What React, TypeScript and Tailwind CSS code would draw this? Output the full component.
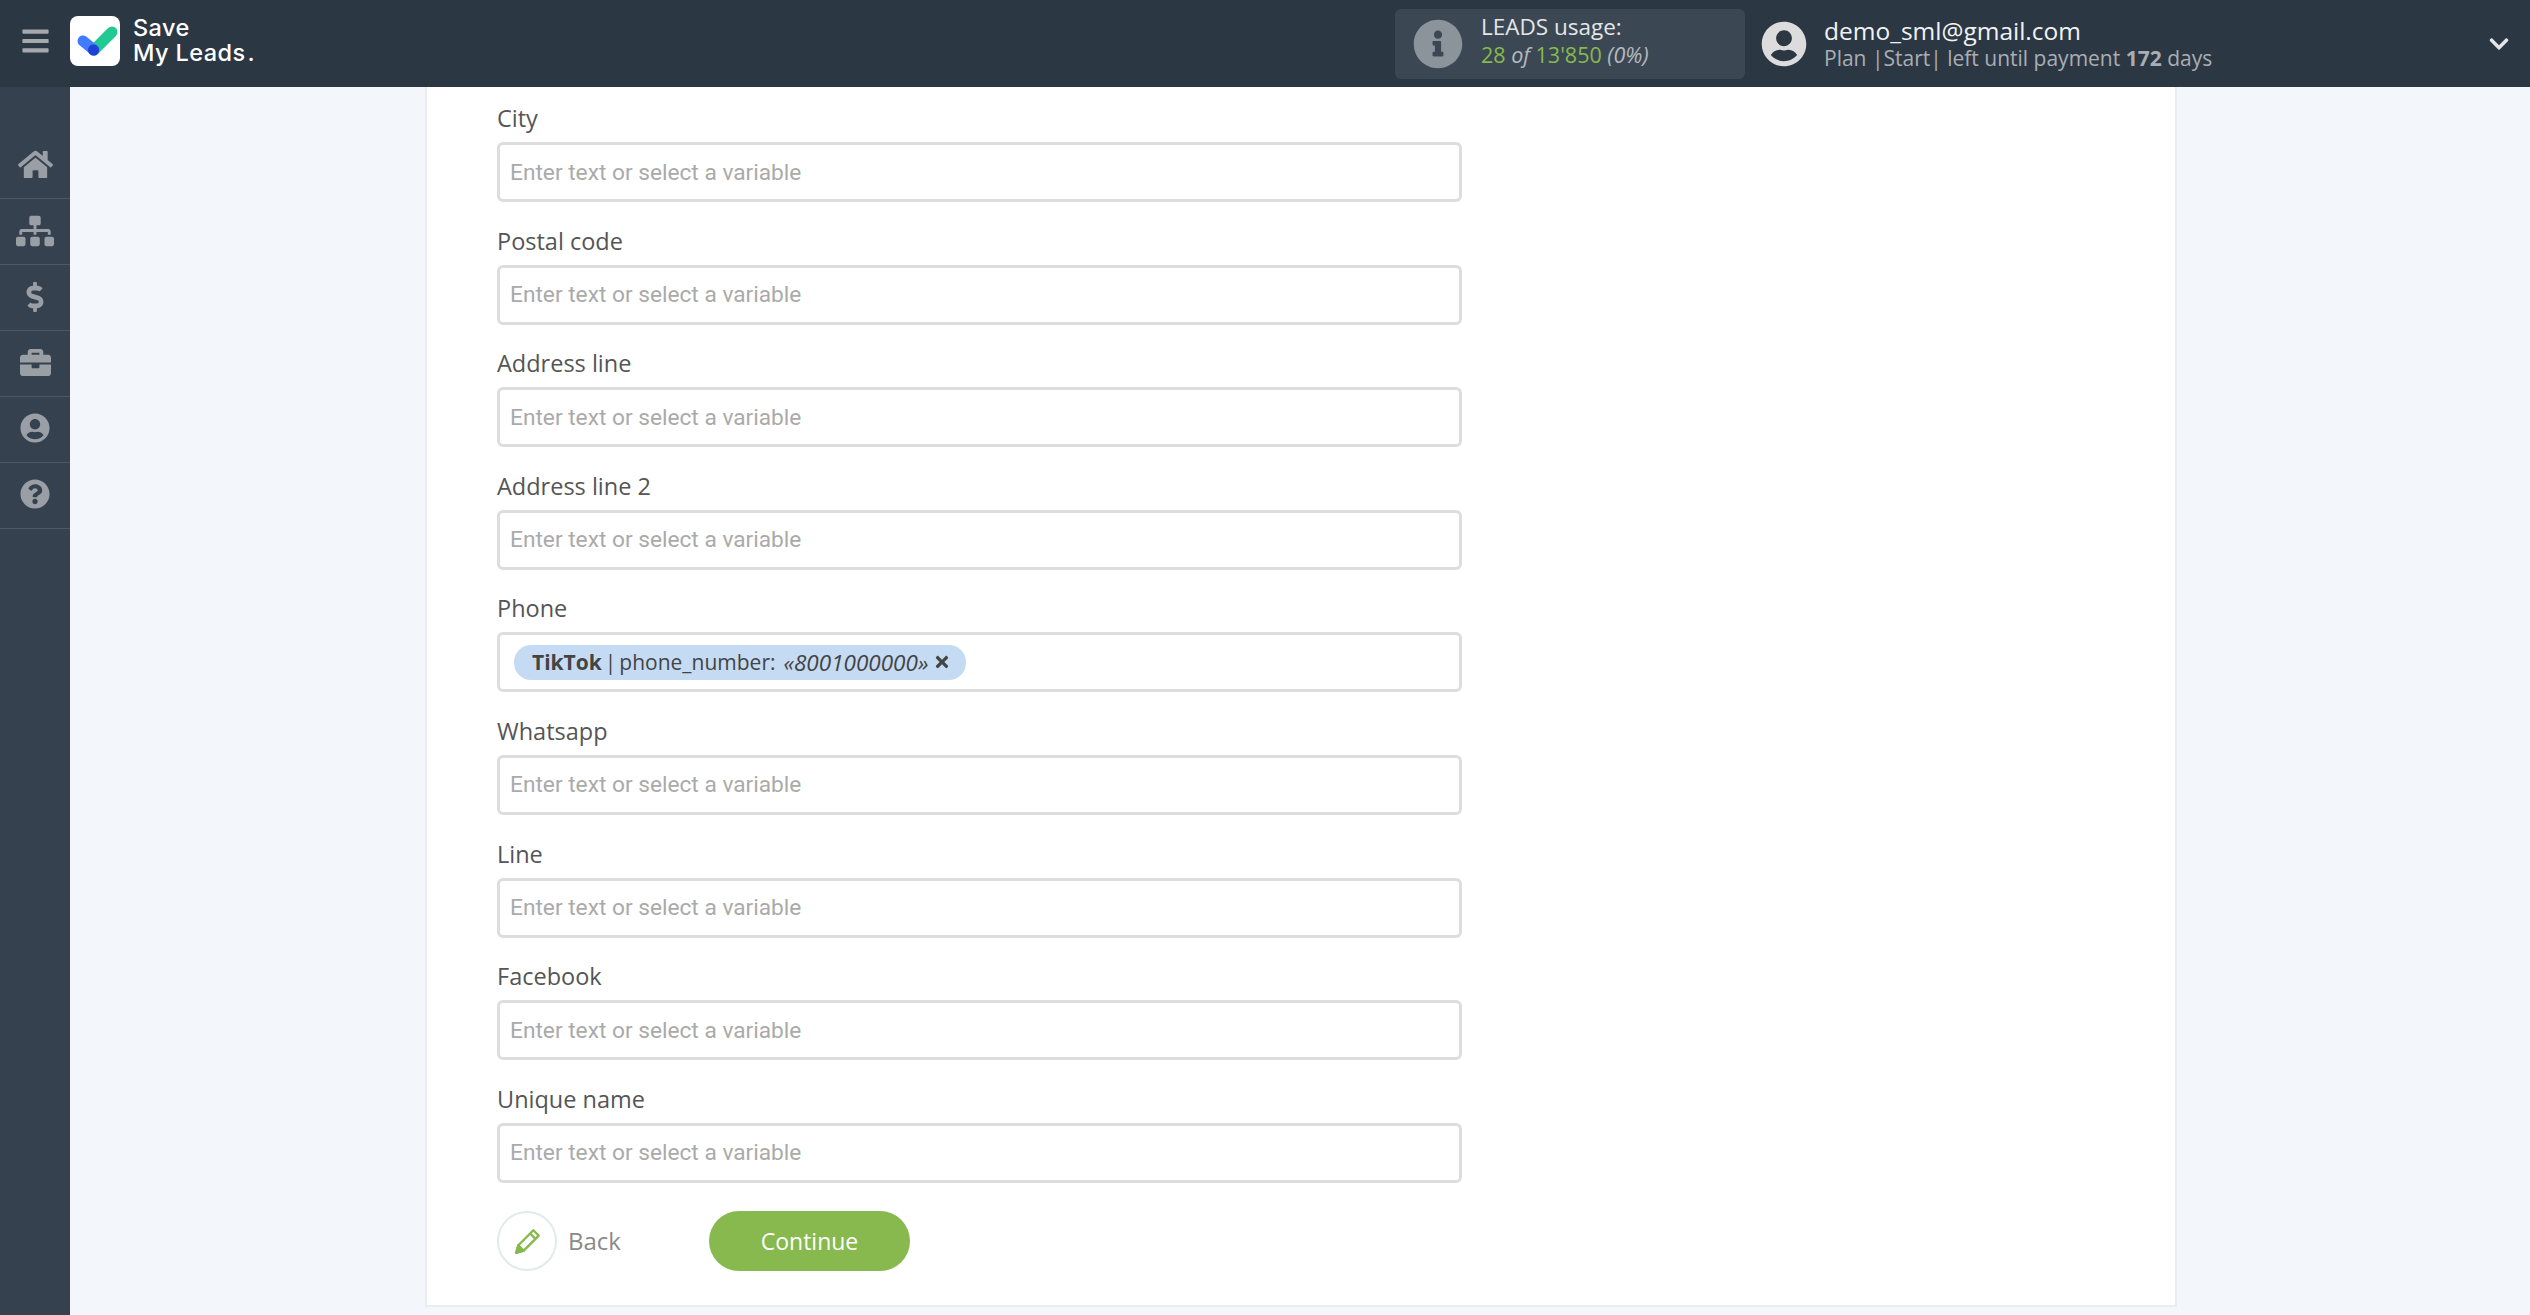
import { FaBars, FaBriefcase, FaChevronDown, FaDollarSign, FaHome, FaInfoCircle, FaQuestionCircle, FaSitemap, FaTimes, FaUserCircle } from "react-icons/fa";

const navItems = [
  { name: "home", icon: <FaHome className="w-[35px] h-[35px]" /> },
  { name: "structure", icon: <FaSitemap className="mt-[2px] w-[38px] h-[38px]" /> },
  { name: "billing", icon: <FaDollarSign className="mt-[2px] w-[30px] h-[30px]" /> },
  { name: "cases", icon: <FaBriefcase className="w-[31px] h-[31px]" /> },
  { name: "profile", icon: <FaUserCircle className="w-[30px] h-[30px]" /> },
  { name: "help", icon: <FaQuestionCircle className="w-[30px] h-[30px]" /> },
];

const fields = ["City", "Postal code", "Address line", "Address line 2", "Phone", "Whatsapp", "Line", "Facebook", "Unique name"];

function Logo() {
  return (
    <svg width="50" height="50" viewBox="0 0 50 50" className="shrink-0">
      <rect width="50" height="50" rx="8" fill="#fff" />
      <path d="M24 34 L42 16" stroke="#22c993" strokeWidth="11" strokeLinecap="round" fill="none" />
      <path d="M13 25 L24 34" stroke="#3f7cff" strokeWidth="11" strokeLinecap="round" fill="none" />
      <circle cx="23.5" cy="34" r="5.5" fill="#1f3fd6" />
    </svg>
  );
}

function Field({ label }: { label: string }) {
  return (
    <div className="h-[122.6px]">
      <div className="h-[38px] pt-[1px] text-[23.5px] leading-[26px] text-[#555] font-['Open_Sans',sans-serif]">{label}</div>
      {label === "Phone" ? (
        <div className="flex items-center w-[965px] h-[60px] border-[3px] border-[#ddd] rounded-[6px] pl-[14px] bg-white">
          <div className="flex items-center h-[35px] pl-[18px] pr-[15px] rounded-[17px] bg-[#c5dbf3] text-[#444] text-[21px] font-['Open_Sans',sans-serif] whitespace-nowrap">
            <b>TikTok</b>
            <span className="ml-[3px]">|</span>
            <span className="ml-[3px]">phone_number:</span>
            <i className="ml-[8px] text-[22.5px]">«8001000000»</i>
            <FaTimes className="ml-[5px] w-[18px] h-[18px]" />
          </div>
        </div>
      ) : (
        <input
          placeholder="Enter text or select a variable"
          className="block w-[965px] h-[60px] border-[3px] border-[#ddd] rounded-[6px] px-[10px] bg-white text-[22.7px] font-['Roboto',sans-serif] placeholder:text-[#aaa] outline-none"
        />
      )}
    </div>
  );
}

export default function App() {
  return (
    <div className="flex flex-col h-screen overflow-hidden bg-[#f3f6fb] font-['Open_Sans',sans-serif]">
      {/* Header */}
      <header className="flex items-center h-[87px] shrink-0 bg-[#2c3744]">
        <div className="flex items-center pb-[6px]">
          <div className="flex justify-center w-[70px] shrink-0">
            <FaBars className="w-[27px] h-[30px] text-[#a5a9ae]" />
          </div>
          <Logo />
          <div className="ml-[13px] pb-[2px] text-white text-[23.5px] leading-[25px] font-medium tracking-[0.4px] font-['Inter',sans-serif]">
            Save
            <br />
            My Leads<span className="ml-[2px]">.</span>
          </div>
        </div>
        <div className="flex items-center ml-auto w-[350px] h-[70px] rounded-[6px] bg-[#3b4854] pl-[18px]">
          <FaInfoCircle className="w-[50px] h-[50px] text-[#8b949b]" />
          <div className="ml-[18px] pb-[6px] text-[21.5px] leading-[28px]">
            <div className="text-[#e4e6e8] text-[22.5px]">LEADS usage:</div>
            <div className="text-[#87b94e]">
              28 <i className="text-[#b5babf]">of</i> 13'850 <i className="text-[#b5babf]">(0%)</i>
            </div>
          </div>
        </div>
        <FaUserCircle className="ml-[16px] w-[46px] h-[46px] text-[#dcdcdc]" />
        <div className="ml-[17px] w-[664px]">
          <div className="text-[#f2f2f2] text-[24.5px] leading-[28px]">demo_sml@gmail.com</div>
          <div className="text-[#a9aeb4] text-[21px] leading-[26px]">
            Plan |Start| left until payment <b>172</b> days
          </div>
        </div>
        <FaChevronDown className="mr-[20px] w-[22px] h-[22px] text-[#e4e6e8]" />
      </header>

      <div className="flex flex-1 min-h-0">
        {/* Sidebar */}
        <aside className="w-[70px] shrink-0 bg-[#364150] pt-[46px]">
          {navItems.map((item) => (
            <div key={item.name} className="flex items-center justify-center h-[66px] pb-[3px] border-b border-[#4d5866] text-[#9a9fa6]">
              {item.icon}
            </div>
          ))}
        </aside>

        {/* Form card */}
        <main className="flex-1 min-w-0">
          <div className="w-[1752px] ml-[355px] pl-[70px] pt-[17px] bg-white border-x-2 border-b-2 border-[#eaecef] h-[1220px]">
            {fields.map((label) => (
              <Field key={label} label={label} />
            ))}
            <div className="flex items-center mt-[4px]">
              <button className="flex items-center justify-center w-[60px] h-[60px] rounded-full border-2 border-[#e2ebe9] bg-white">
                <svg width="30" height="30" viewBox="0 0 28 28" fill="none" stroke="#87b94e" strokeWidth="2.2" strokeLinejoin="round" className="ml-[1px]">
                  <path d="M3 25 L5 18 L19 4 L24 9 L10 23 Z" />
                  <path d="M16 7 L21 12" />
                  <path d="M3 25 L5 18 L10 23 Z" fill="#87b94e" />
                </svg>
              </button>
              <span className="ml-[11px] w-[141px] text-[24px] text-[#8a8a8a]">Back</span>
              <button className="w-[201px] h-[60px] rounded-[30px] bg-[#87b94e] text-white text-[23px]">Continue</button>
            </div>
          </div>
        </main>
      </div>
    </div>
  );
}
